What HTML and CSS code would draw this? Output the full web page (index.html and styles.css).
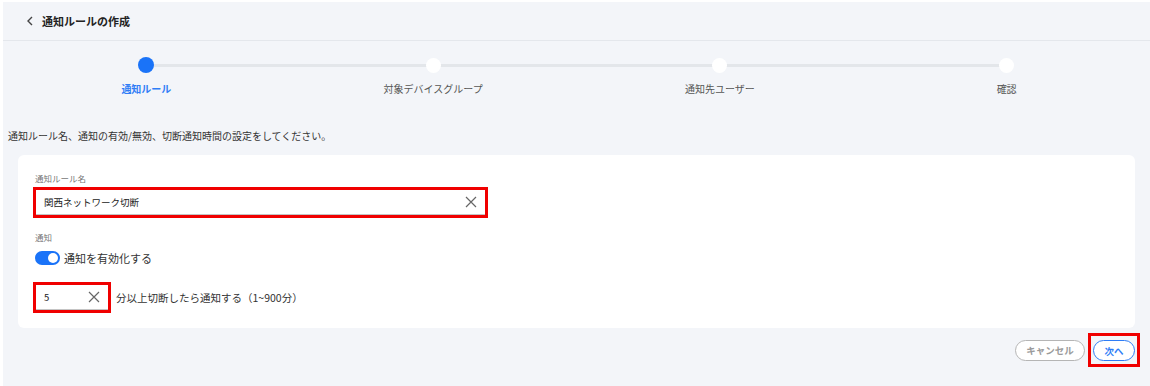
FILE: index.html
```html
<!DOCTYPE html>
<html lang="ja">
<head>
<meta charset="utf-8">
<title>通知ルールの作成</title>
<link rel="stylesheet" href="styles.css">
</head>
<body>
<div class="app">
  <div class="header">
    <svg class="back" width="8" height="10" viewBox="0 0 8 10"><polyline points="6,1 2,5 6,9" fill="none" stroke="#444" stroke-width="1.4"/></svg>
    <span class="title">通知ルールの作成</span>
  </div>

  <div class="stepper">
    <div class="line"></div>
    <div class="step active"><span class="dot"></span><span class="slabel">通知ルール</span></div>
    <div class="step"><span class="dot"></span><span class="slabel">対象デバイスグループ</span></div>
    <div class="step"><span class="dot"></span><span class="slabel">通知先ユーザー</span></div>
    <div class="step"><span class="dot"></span><span class="slabel">確認</span></div>
  </div>

  <p class="desc">通知ルール名、通知の有効/無効、切断通知時間の設定をしてください。</p>

  <div class="card">
    <div class="flabel">通知ルール名</div>
    <div class="hl">
      <div class="field wide">
        <span class="val">関西ネットワーク切断</span>
        <svg class="clear" width="12" height="12" viewBox="0 0 12 12"><path d="M1 1L11 11M11 1L1 11" stroke="#666" stroke-width="1.2"/></svg>
      </div>
    </div>

    <div class="flabel gap">通知</div>
    <div class="toggle-row">
      <span class="toggle"><span class="knob"></span></span>
      <span class="ttext">通知を有効化する</span>
    </div>

    <div class="min-row">
      <div class="hl">
        <div class="field small">
          <span class="val">5</span>
          <svg class="clear" width="12" height="12" viewBox="0 0 12 12"><path d="M1 1L11 11M11 1L1 11" stroke="#666" stroke-width="1.2"/></svg>
        </div>
      </div>
      <span class="mtext">分以上切断したら通知する（1~900分）</span>
    </div>
  </div>

  <div class="footer">
    <button class="btn cancel">キャンセル</button>
    <div class="hl btnbox"><button class="btn next">次へ</button></div>
  </div>
</div>
</body>
</html>
```

FILE: styles.css
```css
body{
margin:0;
background:#ffffff;
font-family:"Noto Sans CJK JP","Noto Sans",sans-serif;
color:#333;
}
.app{
margin:2px 0 0 3px;
height:384px;
background:#f3f5f9;
}
.header{
height:38px;
border-bottom:1px solid #e4e7ec;
display:flex;
align-items:center;
padding-left:23px;
}
.back{margin-right:8px;}
.title{
font-size:11px;
font-weight:bold;
color:#222;
}
.stepper{
position:relative;
display:grid;
grid-template-columns:repeat(4,1fr);
padding-top:16px;
}
.line{
position:absolute;
left:12.5%;
right:12.5%;
top:23px;
height:3px;
background:#e3e6ea;
}
.step{
display:flex;
flex-direction:column;
align-items:center;
position:relative;
}
.dot{
width:15px;
height:15px;
margin-top:0.5px;
border-radius:50%;
background:#fff;
}
.step.active .dot{
width:16px;
height:16px;
margin-top:0;
background:#1a73f8;
}
.slabel{
margin-top:9px;
font-size:10px;
line-height:14px;
color:#555;
}
.step:not(.active) .slabel{margin-top:9.5px;}
.step.active .slabel{
color:#2f7df6;
font-weight:bold;
}
.desc{
margin:33px 0 0 5px;
font-size:10px;
line-height:14px;
color:#333;
}
.card{
margin:12px 15px 0 15px;
background:#fff;
border-radius:6px;
padding:16px 15px 15px 15px;
}
.flabel{
font-size:8.5px;
line-height:14px;
color:#777;
padding-left:2px;
margin-bottom:2px;
}
.flabel.gap{margin-top:12px;margin-bottom:0;}
.hl{
display:inline-block;
border:3px solid #f00000;
vertical-align:middle;
}
.field{
display:flex;
align-items:center;
justify-content:space-between;
height:24px;
background:#fff;
border-bottom:1px solid #c4c4c4;
padding:0 8px 0 8px;
}
.field.wide{width:433px;}
.field.small{width:56px;padding-left:8px;}
.val{
font-size:9.5px;
color:#222;
}
.toggle-row{
display:flex;
align-items:center;
margin-top:6px;
padding-left:2px;
height:16px;
}
.toggle{
position:relative;
width:25px;
height:14px;
border-radius:7px;
background:#1a73f8;
}
.knob{
position:absolute;
right:2px;
top:2px;
width:10px;
height:10px;
border-radius:50%;
background:#fff;
}
.ttext{
margin-left:4px;
font-size:11px;
color:#333;
}
.min-row{
display:flex;
align-items:center;
margin-top:16px;
}
.mtext{
margin-left:5px;
font-size:10.5px;
color:#333;
}
.footer{
display:flex;
justify-content:flex-end;
align-items:center;
gap:3px;
margin-top:5px;
padding-right:10px;
}
.btn{
font-family:inherit;
font-size:9.5px;
font-weight:bold;
background:#fff;
border-radius:11px;
height:21px;
padding:0;
cursor:pointer;
}
.cancel{
width:70px;
border:1.5px solid #b5b5b5;
color:#9a9a9a;
}
.next{
width:42px;
border:1.5px solid #2f7df6;
color:#2f7df6;
display:block;
}
.btnbox{
padding:4px 2px 3px 2px;
}
```
